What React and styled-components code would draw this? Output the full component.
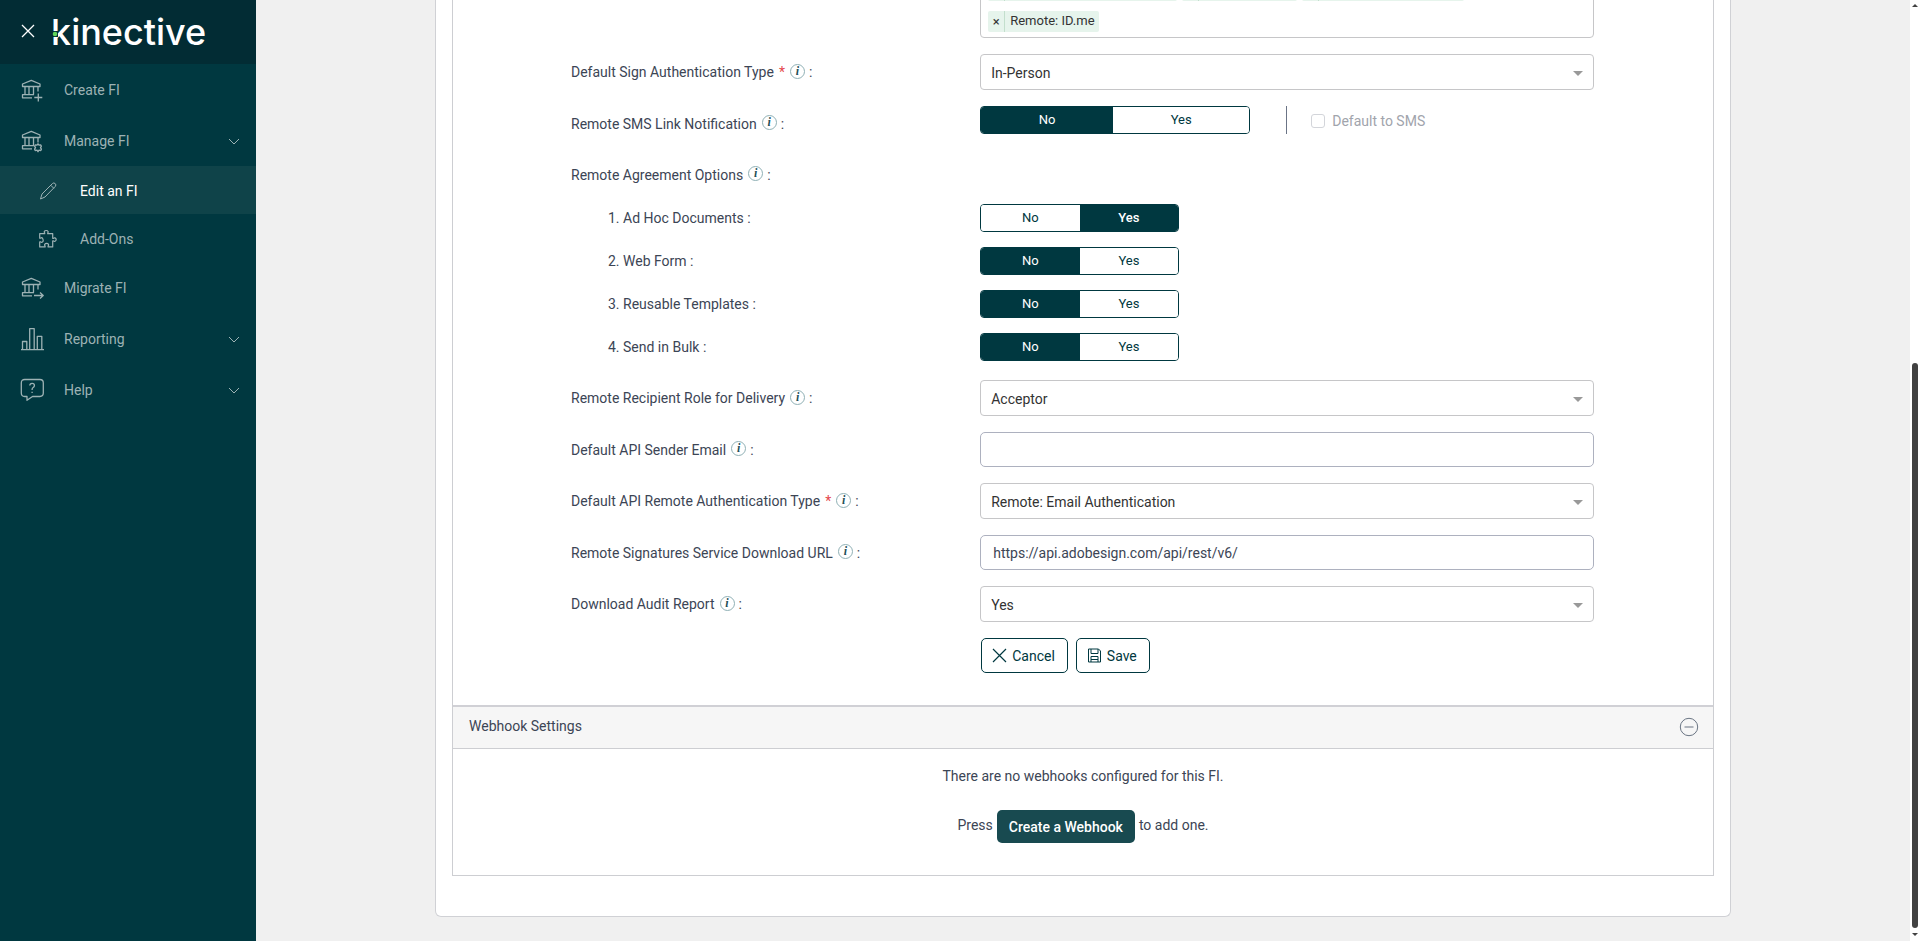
// src/App.jsx
import React, { useState } from "react";
import styled, { createGlobalStyle, css } from "styled-components";

const GlobalStyle = createGlobalStyle`
  * {
    box-sizing: border-box;
  }

  body {
    margin: 0;
    background: #f0f0f0;
    color: #3c4555;
    font-family: Roboto, "Liberation Sans", sans-serif;
    font-size: 14px;
    line-height: 20px;
  }

  button,
  input,
  select {
    font: inherit;
  }
`;

const Layout = styled.div`
  display: flex;
  height: 100vh;
`;

/* ---------- Sidebar ---------- */

const Sidebar = styled.aside`
  flex: 0 0 256px;
  background: #003840;
`;

const SidebarHead = styled.div`
  display: flex;
  align-items: center;
  gap: 16px;
  height: 64px;
  padding-left: 20px;
  background: #022c34;
`;

const CloseButton = styled.button`
  display: flex;
  padding: 0;
  border: 0;
  background: none;
  color: #fff;
  cursor: pointer;
`;

const Logo = styled.svg`
  display: block;
  overflow: visible;
  font-family: Inter, sans-serif;
`;

const Nav = styled.nav`
  display: flex;
  flex-direction: column;
`;

const NavLink = styled.a`
  display: flex;
  align-items: center;
  gap: 20px;
  height: 51px;
  padding: 0 16px 0 20px;
  color: #9db2b4;
  text-decoration: none;

  ${({ $sub }) =>
    $sub &&
    css`
      gap: 22px;
      height: 48px;
      padding-top: 2px;
      padding-left: 38px;
    `}

  ${({ $active }) =>
    $active &&
    css`
      background: #0f4349;
    `}
`;

const NavText = styled.span`
  flex: 1;
  color: ${({ $active }) => ($active ? "#fff" : "inherit")};
`;

/* ---------- Page ---------- */

// column-reverse keeps the page scrolled to its end
const ScrollArea = styled.main`
  flex: 1;
  display: flex;
  flex-direction: column-reverse;
  overflow-y: auto;
  scrollbar-width: none;
`;

const Page = styled.div`
  padding: 0 16px 24px;
`;

const Card = styled.div`
  max-width: 1296px;
  margin: 0 auto;
  padding: 0 16px 40px;
  border: 1px solid #d0d1d5;
  border-top: 0;
  border-radius: 0 0 6px 6px;
  background: #fff;
`;

const Panel = styled.section`
  border: 1px solid #cdced2;
  border-top: 0;
`;

const Form = styled.form`
  display: flex;
  flex-direction: column;
  gap: 16px;
  padding: 0 119px 32px 118px;
`;

const Row = styled.div`
  display: grid;
  grid-template-columns: 2fr 3fr;
  align-items: ${({ $top }) => ($top ? "start" : "center")};
`;

const Label = styled.label`
  display: flex;
  align-items: center;
  min-height: 35px;
`;

const SubLabel = styled.span`
  padding-left: 37px;
`;

const Required = styled.span`
  margin-left: 5px;
  color: #e5484d;
`;

const Info = styled.span`
  display: flex;
  align-items: center;
  justify-content: center;
  width: 15px;
  height: 15px;
  margin: 0 4px 2px 5px;
  border: 1px solid #8fb0b5;
  border-radius: 50%;
  color: #1f4f57;
  font: italic bold 12px/13px "Liberation Serif", serif;
`;

const SubGroup = styled.div`
  display: flex;
  flex-direction: column;
  gap: 12px;
  padding-bottom: 3px;
`;

const SubRows = styled.div`
  display: flex;
  flex-direction: column;
  gap: 15px;
`;

const MultiSelect = styled.div`
  display: flex;
  flex-wrap: wrap;
  gap: 5px;
  padding: 5px 7px;
  border: 1px solid #c6c6c8;
  border-radius: 4px;
`;

const Chip = styled.span`
  display: flex;
  height: 21px;
  width: ${({ $width }) => $width || "auto"};
  border-radius: 2px;
  background: #e6f4ec;
  color: #333;
  font-size: 13px;
  line-height: 20px;
`;

const ChipRemove = styled.button`
  width: 17px;
  padding: 0;
  border: 0;
  border-right: 1px solid #c3dfcd;
  background: none;
  color: #333;
  line-height: 19px;
`;

const ChipText = styled.span`
  padding: 0 4px 0 5px;
`;

const ChipBreak = styled.span`
  flex-basis: 100%;
`;

const SelectBox = styled.div`
  position: relative;
`;

const Select = styled.select`
  display: block;
  width: 100%;
  height: 36px;
  padding: 1px 30px 0 10px;
  appearance: none;
  border: 1px solid #c6c6c8;
  border-radius: 4px;
  background: #fff;
  color: #333;
`;

const SelectArrow = styled.svg`
  position: absolute;
  top: 17px;
  right: 11px;
  fill: #999;
  pointer-events: none;
`;

const Input = styled.input`
  display: block;
  width: 100%;
  height: 35px;
  padding: 0 12px;
  border: 1px solid #adb1bf;
  border-radius: 5px;
  background: #fff;
  color: #3c4555;
`;

const Toggle = styled.div`
  display: grid;
  grid-template-columns: ${({ $wide }) => ($wide ? "132px 136px" : "1fr 1fr")};
  width: ${({ $wide }) => ($wide ? "270px" : "199px")};
  height: 28px;
  border: 1px solid #003840;
  border-radius: 4px;
  overflow: hidden;
`;

const ToggleButton = styled.button`
  padding: 0 0 1px;
  border: 0;
  background: ${({ $on }) => ($on ? "#003840" : "#fff")};
  color: ${({ $on }) => ($on ? "#fff" : "#003840")};
  font-size: 13px;
  font-weight: ${({ $strong }) => ($strong ? 500 : 400)};
  cursor: pointer;
`;

const Inline = styled.div`
  display: flex;
  align-items: center;
`;

const Divider = styled.span`
  width: 1px;
  height: 28px;
  margin: 0 24px 0 36px;
  background: #6b7486;
`;

const CheckLabel = styled.label`
  display: flex;
  align-items: center;
  gap: 7px;
  padding-top: 2px;
  color: #a1a4ac;
`;

const Checkbox = styled.input`
  appearance: none;
  width: 14px;
  height: 14px;
  margin: 0;
  border: 1px solid #d3d5da;
  border-radius: 3px;
`;

const Actions = styled.div`
  grid-column: 2;
  display: flex;
  gap: 8px;
  padding-left: 1px;
`;

const OutlineButton = styled.button`
  display: flex;
  align-items: center;
  gap: 5px;
  height: 35px;
  padding: 0 12px 0 10px;
  border: 1px solid #003840;
  border-radius: 5px;
  background: #fff;
  color: #003840;
  cursor: pointer;
`;

const WebhookHead = styled.header`
  display: flex;
  align-items: center;
  justify-content: space-between;
  height: 44px;
  padding: 0 14px 0 16px;
  border-top: 2px solid #d0d0d5;
  border-bottom: 1px solid #cdced2;
  background: #f6f6f6;
`;

const Title = styled.h2`
  margin: 0 0 4px;
  font-size: 14px;
  font-weight: 400;
`;

const IconButton = styled.button`
  display: flex;
  padding: 0 0 1px;
  border: 0;
  background: none;
  color: #6a7583;
  cursor: pointer;
`;

const WebhookBody = styled.div`
  padding: 17px 16px 32px;
  text-align: center;
`;

const Text = styled.p`
  margin: 0;
`;

const PressLine = styled.div`
  display: flex;
  align-items: center;
  justify-content: center;
  gap: 4px;
  margin-top: 24px;
`;

const PressText = styled.span`
  padding-bottom: 3px;
`;

const PrimaryButton = styled.button`
  height: 33px;
  padding: 0 12px;
  border: 0;
  border-radius: 5px;
  background: #184a50;
  color: #fff;
  font-weight: 500;
  cursor: pointer;
`;

/* ---------- Scrollbar ---------- */

const Track = styled.div`
  flex: 0 0 10px;
  display: flex;
  flex-direction: column;
  align-items: center;
  justify-content: space-between;
  padding: 4px 0;
  background: #fff;
`;

const TrackArrow = styled.svg`
  fill: #424242;
`;

const Thumb = styled.div`
  width: 6px;
  height: calc(60% + 5px);
  margin: auto 0 5px;
  border-radius: 3px;
  background: #424242;
`;

/* ---------- Icons ---------- */

const Icon = ({ size = 24, children, width = 1 }) => (
  <svg
    width={size}
    height={size}
    viewBox={`0 0 ${size} ${size}`}
    fill="none"
    stroke="currentColor"
    strokeWidth={width}
    strokeLinejoin="round"
    aria-hidden="true"
  >
    {children}
  </svg>
);

const BankIcon = ({ children }) => (
  <Icon width={1.3}>
    <path d="M2.5 6 11.3 2.3 20 6v2.5H2.5z" />
    <path d="M5 8.5v8M9 8.5v8M13.5 8.5v8M18 8.5v5" />
    <path d="M14 16.7H2.5v3.1H12" />
    {children}
  </Icon>
);

const CreateIcon = () => (
  <BankIcon>
    <path d="M18.3 15.5v8M14.3 19.5h8" />
  </BankIcon>
);

const ManageIcon = () => (
  <BankIcon>
    <path d="m18 14.8 1 1.4 1.8-.3.6 1.3-.9 1.5.9 1.5-.6 1.3-1.8-.3-1 1.5-1-1.5-1.8.3-.6-1.3.9-1.5-.9-1.5.6-1.3 1.8.3z" />
  </BankIcon>
);

const MigrateIcon = () => (
  <BankIcon>
    <path d="M14 19.5h9M20 16.5l3.2 3-3.2 3" />
  </BankIcon>
);

const PencilIcon = () => (
  <Icon size={20}>
    <path d="M2.5 18 4 13 14.5 2.5q1.3-1.2 2.7.1t.1 2.8L7 16zM12.8 4.3l3 3" />
  </Icon>
);

const PuzzleIcon = () => (
  <Icon size={20} width={1.2}>
    <path d="M1.7 4.7h5V4q-.7-.8-.4-1.5.5-1 1.900-1t1.900 1q.3.7-.4 1.500v.7h5v4.600h.8q.8-.8 1.600-.4 1.100.5 1.100 1.700t-1.100 1.700q-.8.4-1.600-.4h-.8v6h-4.600V17q.9-.8.4-1.700-.6-.9-1.900-.9t-1.900.9q-.5.9.4 1.700v.9H1.700v-5h1q.9.8 1.700.2.8-.6.8-1.600T4.400 9q-.8-.6-1.700.2h-1z" />
  </Icon>
);

const ReportIcon = () => (
  <Icon width={1.3}>
    <path d="M1 22.7h23M2.5 22.5v-8h4.3v8M9.7 22.5V1.6h4.500v20.900M17.3 22.500V9.300h4.500v13.200" />
  </Icon>
);

const HelpIcon = () => (
  <Icon width={1.3}>
    <path d="M4.7 1.5h15.2q3.4 0 3.4 3.4v10.2q0 3.4-3.4 3.4h-7.4L7 22.3v-3.8H4.7q-3.4 0-3.4-3.4V4.9q0-3.4 3.4-3.4z" />
    <path d="M9.8 7.6q0-2.2 2.3-2.2t2.3 2.1q0 1.2-1.2 2-1.100.7-1.100 1.900v.5M12.1 13.7v1.400" />
  </Icon>
);

const ChevronIcon = () => (
  <Icon size={12}>
    <path d="M1 4l5 5 5-5" />
  </Icon>
);

const CancelIcon = () => (
  <Icon size={15} width={1.2}>
    <path d="M1 1l13 13M14 1L1 14" />
  </Icon>
);

const SaveIcon = () => (
  <Icon size={15}>
    <path d="M1.500 1h10l2 2v11h-12zM4 1v4.500h7V1M4 14V8.500h7V14M4 11.500h7" />
  </Icon>
);

const Arrow = () => (
  <SelectArrow width="10" height="5" viewBox="0 0 10 5" aria-hidden="true">
    <path d="M0 0h10L5 5z" />
  </SelectArrow>
);

/* ---------- Parts ---------- */

const FieldLabel = ({ id, text, required }) => (
  <Label htmlFor={id}>
    {text}
    {required && <Required>*</Required>}
    <Info>i</Info>:
  </Label>
);

const SelectField = ({ id, label, value, required }) => (
  <Row>
    <FieldLabel id={id} text={label} required={required} />
    <SelectBox>
      <Select id={id} defaultValue={value}>
        <option>{value}</option>
      </Select>
      <Arrow />
    </SelectBox>
  </Row>
);

const InputField = ({ id, label, value, type = "text" }) => (
  <Row>
    <FieldLabel id={id} text={label} />
    <Input id={id} type={type} defaultValue={value} />
  </Row>
);

const YesNo = ({ label, initial, wide }) => {
  const [value, setValue] = useState(initial);

  return (
    <Toggle role="group" aria-label={label} $wide={wide}>
      {["No", "Yes"].map((option) => (
        <ToggleButton
          key={option}
          type="button"
          $on={value === option}
          $strong={value === option && option === "Yes"}
          aria-pressed={value === option}
          onClick={() => setValue(option)}
        >
          {option}
        </ToggleButton>
      ))}
    </Toggle>
  );
};

const navItems = [
  { text: "Create FI", icon: CreateIcon },
  { text: "Manage FI", icon: ManageIcon, open: true },
  { text: "Edit an FI", icon: PencilIcon, sub: true, active: true },
  { text: "Add-Ons", icon: PuzzleIcon, sub: true },
  { text: "Migrate FI", icon: MigrateIcon },
  { text: "Reporting", icon: ReportIcon, open: true },
  { text: "Help", icon: HelpIcon, open: true },
];

const agreementOptions = [
  { text: "1. Ad Hoc Documents", value: "Yes" },
  { text: "2. Web Form", value: "No" },
  { text: "3. Reusable Templates", value: "No" },
  { text: "4. Send in Bulk", value: "No" },
];

const App = () => {
  return (
    <Layout>
      <GlobalStyle />
      <Sidebar>
        <SidebarHead>
          <CloseButton type="button" aria-label="Close menu">
            <Icon size={16} width={1.3}>
              <path d="M2 1l12 12M14 1L2 13" />
            </Icon>
          </CloseButton>
          <Logo width="160" height="36" viewBox="0 0 160 36">
            <text x="-1" y="31" fontSize="36" fontWeight="500" fill="#fff">
              kinective
            </text>
            {/* green dot that splits the stem of the k */}
            <rect x="0" y="17" width="6" height="6" fill="#022c34" />
            <circle cx="3" cy="20" r="2.3" fill="#5fd35a" />
          </Logo>
        </SidebarHead>
        <Nav>
          {navItems.map(({ text, icon: ItemIcon, open, sub, active }) => (
            <NavLink href="#" key={text} $sub={sub} $active={active}>
              <ItemIcon />
              <NavText $active={active}>{text}</NavText>
              {open && <ChevronIcon />}
            </NavLink>
          ))}
        </Nav>
      </Sidebar>

      <ScrollArea>
        <Page>
          <Card>
            <Panel>
              <Form>
                <Row>
                  <span />
                  <MultiSelect>
                    <Chip $width="189px">
                      <ChipRemove type="button" aria-label="Remove" />
                    </Chip>
                    <Chip $width="115px">
                      <ChipRemove type="button" aria-label="Remove" />
                    </Chip>
                    <Chip $width="162px">
                      <ChipRemove type="button" aria-label="Remove" />
                    </Chip>
                    <ChipBreak />
                    <Chip>
                      <ChipRemove type="button">×</ChipRemove>
                      <ChipText>Remote: ID.me</ChipText>
                    </Chip>
                  </MultiSelect>
                </Row>

                <SelectField
                  id="signAuth"
                  label="Default Sign Authentication Type"
                  value="In-Person"
                  required
                />

                <Row $top>
                  <FieldLabel text="Remote SMS Link Notification" />
                  <Inline>
                    <YesNo label="Remote SMS Link Notification" initial="No" wide />
                    <Divider />
                    <CheckLabel>
                      <Checkbox type="checkbox" disabled />
                      Default to SMS
                    </CheckLabel>
                  </Inline>
                </Row>

                <SubGroup>
                  <FieldLabel text="Remote Agreement Options" />
                  <SubRows>
                    {agreementOptions.map(({ text, value }) => (
                      <Row key={text}>
                        <SubLabel>{text} :</SubLabel>
                        <YesNo label={text} initial={value} />
                      </Row>
                    ))}
                  </SubRows>
                </SubGroup>

                <SelectField
                  id="recipientRole"
                  label="Remote Recipient Role for Delivery"
                  value="Acceptor"
                />
                <InputField
                  id="senderEmail"
                  label="Default API Sender Email"
                  type="email"
                />
                <SelectField
                  id="apiAuth"
                  label="Default API Remote Authentication Type"
                  value="Remote: Email Authentication"
                  required
                />
                <InputField
                  id="downloadUrl"
                  label="Remote Signatures Service Download URL"
                  value="https://api.adobesign.com/api/rest/v6/"
                />
                <SelectField
                  id="auditReport"
                  label="Download Audit Report"
                  value="Yes"
                />

                <Row>
                  <Actions>
                    <OutlineButton type="button">
                      <CancelIcon />
                      Cancel
                    </OutlineButton>
                    <OutlineButton type="button">
                      <SaveIcon />
                      Save
                    </OutlineButton>
                  </Actions>
                </Row>
              </Form>

              <WebhookHead>
                <Title>Webhook Settings</Title>
                <IconButton type="button" aria-label="Collapse">
                  <Icon size={20}>
                    <circle cx="10" cy="10" r="8.7" />
                    <path d="M5.500 10h9" />
                  </Icon>
                </IconButton>
              </WebhookHead>
              <WebhookBody>
                <Text>There are no webhooks configured for this FI.</Text>
                <PressLine>
                  <PressText>Press</PressText>
                  <PrimaryButton type="button">Create a Webhook</PrimaryButton>
                  <PressText>to add one.</PressText>
                </PressLine>
              </WebhookBody>
            </Panel>
          </Card>
        </Page>
      </ScrollArea>

      <Track aria-hidden="true">
        <TrackArrow width="6" height="4" viewBox="0 0 6 4">
          <path d="M3 0l3 3H0z" />
        </TrackArrow>
        <Thumb />
        <TrackArrow width="6" height="4" viewBox="0 0 6 4">
          <path d="M0 0h6L3 3z" />
        </TrackArrow>
      </Track>
    </Layout>
  );
};

export default App;
